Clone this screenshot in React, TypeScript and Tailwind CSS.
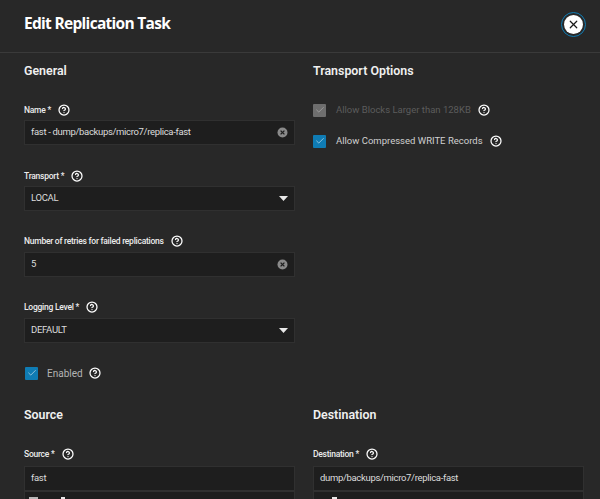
import React from 'react';
import { Check, CircleHelp, X } from 'lucide-react';

const Help = () => (
  <CircleHelp size={12} strokeWidth={2.5} className="text-white shrink-0" />
);

const Label = ({ text, required }: { text: string; required?: boolean }) => (
  <div className="flex items-center h-[14px] text-[8.500px] tracking-[-0.25px] font-medium text-[#ececec]">
    <span>
      {text}
      {required && ' *'}
    </span>
    <span className="ml-[7px]">
      <Help />
    </span>
  </div>
);

const ClearIcon = () => (
  <svg width="11" height="11" viewBox="0 0 11 11" className="shrink-0">
    <circle cx="5.5" cy="5.5" r="5" fill="#8a8a8a" />
    <path d="M3.6 3.6 7.4 7.4M7.4 3.6 3.6 7.4" stroke="#1e1e1e" strokeWidth="1.3" />
  </svg>
);

const Caret = () => (
  <svg width="9" height="5" viewBox="0 0 9 5" className="shrink-0">
    <path d="M0 0h9L4.500 5z" fill="#e8e8e8" />
  </svg>
);

const Field = ({ value, trailing, top = 'mt-[3px]' }: { value: string; trailing?: React.ReactNode; top?: string }) => (
  <div className={`${top} h-[25px] flex items-center justify-between pl-[6px] pr-[6px] bg-[#1e1e1e] border border-[#303030] text-[9.500px] tracking-[-0.33px] text-[#dcdcdc]`}>
    <span>{value}</span>
    {trailing}
  </div>
);

const Box = ({ muted }: { muted?: boolean }) => (
  <span
    className={`w-[13px] h-[13px] rounded-[1px] flex items-center justify-center shrink-0 ${
      muted ? 'bg-[#6e6e6e]' : 'bg-[#0f7cb4]'
    }`}
  >
    <Check size={10} strokeWidth={1.6} className={muted ? 'text-[#b0b0b0]' : 'text-[#cfe6f2]'} />
  </span>
);

const Heading = ({ children }: { children: React.ReactNode }) => (
  <h3 className="text-[12.400px] leading-[16px] font-semibold text-[#f0f0f0]">{children}</h3>
);

export default function App() {
  return (
    <div className="w-[600px] h-[499px] overflow-hidden bg-[#282828] font-['Roboto',sans-serif]">
      {/* Header */}
      <header className="h-[53px] flex items-center justify-between pl-[24px] pr-[14px] pb-[4px] border-b border-[#3a3a3a]">
        <h1 className="text-[15.500px] font-bold text-white font-['Open_Sans',sans-serif] tracking-[-0.7px]">Edit Replication Task</h1>
        <span className="w-[25px] h-[25px] rounded-full border border-[#0f7cb4] flex items-center justify-center">
          <span className="w-[19px] h-[19px] rounded-full bg-white flex items-center justify-center">
            <X size={13} strokeWidth={2.2} className="text-[#1a1a1a]" />
          </span>
        </span>
      </header>

      <div className="grid grid-cols-[271px_271px] gap-x-[18px] pl-[24px] pt-[10px]">
        {/* General */}
        <section>
          <Heading>General</Heading>
          <div className="mt-[24px]">
            <Label text="Name" required />
            <Field value="fast - dump/backups/micro7/replica-fast" trailing={<ClearIcon />} />
          </div>
          <div className="mt-[24px]">
            <Label text="Transport" required />
            <Field value="LOCAL" trailing={<Caret />} />
          </div>
          <div className="mt-[23px]">
            <Label text="Number of retries for failed replications" />
            <Field top="mt-[4px]" value="5" trailing={<ClearIcon />} />
          </div>
          <div className="mt-[23px]">
            <Label text="Logging Level" required />
            <Field top="mt-[4px]" value="DEFAULT" trailing={<Caret />} />
          </div>
          <div className="mt-[23px] flex items-center h-[14px] pl-[1px] text-[10px] text-[#b4b4b4]">
            <Box />
            <span className="ml-[9px]">Enabled</span>
            <span className="ml-[6px]">
              <Help />
            </span>
          </div>
        </section>

        {/* Transport Options */}
        <section>
          <Heading>Transport Options</Heading>
          <div className="mt-[24px] flex items-center h-[14px] text-[9.500px] text-[#5c5c5c]">
            <Box muted />
            <span className="ml-[10px]">Allow Blocks Larger than 128KB</span>
            <span className="ml-[7px]">
              <Help />
            </span>
          </div>
          <div className="mt-[17px] flex items-center h-[14px] text-[9.500px] text-[#d0d0d0]">
            <Box />
            <span className="ml-[10px]">Allow Compressed WRITE Records</span>
            <span className="ml-[7px]">
              <Help />
            </span>
          </div>
        </section>

        {/* Source */}
        <section className="mt-[27px]">
          <Heading>Source</Heading>
          <div className="mt-[24px]">
            <Label text="Source" required />
            <Field top="mt-[5px]" value="fast" />
            <div className="h-[9px] bg-[#1e1e1e] border border-[#303030] flex items-start pt-[5px] pl-[4px]">
              <span className="w-[9px] h-[3px] bg-[#b8b8b8]" />
              <span className="w-[4px] h-[3px] ml-[23px] bg-[#e8e8e8]" />
            </div>
          </div>
        </section>

        {/* Destination */}
        <section className="mt-[27px]">
          <Heading>Destination</Heading>
          <div className="mt-[24px]">
            <Label text="Destination" required />
            <Field top="mt-[5px]" value="dump/backups/micro7/replica-fast" />
            <div className="h-[9px] bg-[#1e1e1e] border border-[#303030] flex items-start pt-[5px] pl-[18px]">
              <span className="w-[5px] h-[3px] bg-[#e8e8e8]" />
            </div>
          </div>
        </section>
      </div>
    </div>
  );
}
